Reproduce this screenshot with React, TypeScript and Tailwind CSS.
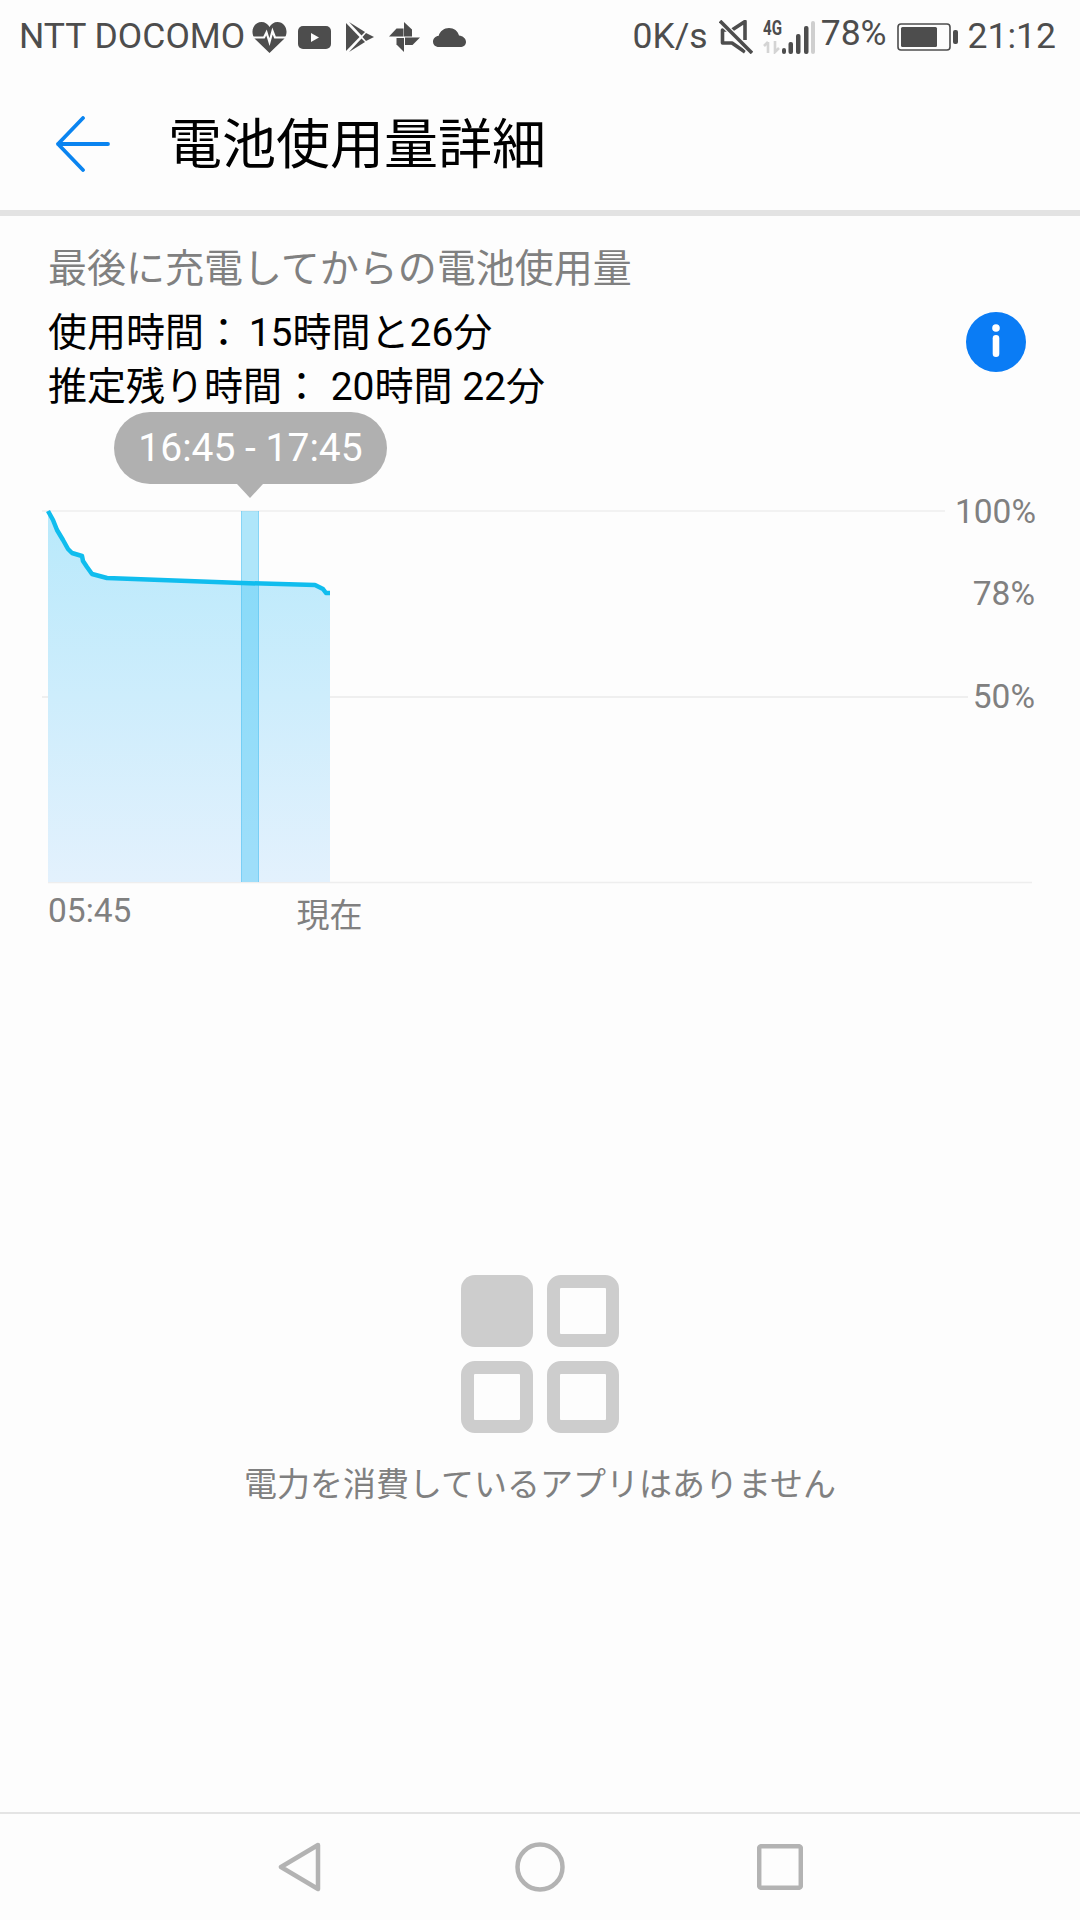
const font = { fontFamily: 'Roboto, "Noto Sans CJK JP", sans-serif' };

function StatusLeftIcons() {
  return (
    <div className="flex items-center">
      {/* heart rate */}
      <svg width="35" height="31" viewBox="0 0 35 31" className="ml-[7px]">
        <path d="M17.5 31 L3 17 C-2.5 10 1.5 0 9.5 0 C13 0 16 2 17.5 5 C19 2 22 0 25.5 0 C33.5 0 37.5 10 32 17 Z" fill="#4d4d4d" />
        <path d="M0 15.5 H12 L14.5 10.5 L17.5 20 L20.5 9 L23 15.5 H35" fill="none" stroke="#fdfdfd" strokeWidth="2.2" />
      </svg>
      {/* youtube */}
      <svg width="33" height="23" viewBox="0 0 33 23" className="ml-[11px]">
        <rect x="0" y="0" width="33" height="23" rx="5" fill="#4d4d4d" />
        <path d="M13 7 L21 11.5 L13 16 Z" fill="#fdfdfd" />
      </svg>
      {/* play store */}
      <svg width="28" height="30" viewBox="0 0 28 30" className="ml-[15px]">
        <path d="M0 1 L13.5 15 L0 29 Z" fill="#4d4d4d" />
        <path d="M3 0 L19 10 L15.5 13.5 Z" fill="#4d4d4d" />
        <path d="M20 11 L28 15 L20 19 L16.5 15 Z" fill="#4d4d4d" />
        <path d="M3 30 L19 20 L15.5 16.5 Z" fill="#4d4d4d" />
      </svg>
      {/* pinwheel */}
      <svg width="31" height="30" viewBox="0 0 31 30" className="ml-[15px]">
        <path d="M15 0 L23 7.5 V14.5 H15 Z" fill="#4d4d4d" />
        <path d="M16 15.5 H31 L23.5 23 H16 Z" fill="#4d4d4d" />
        <path d="M15 16 V30 L7.5 22.5 V16 Z" fill="#4d4d4d" />
        <path d="M14.5 14.5 H0 L7.5 6.5 H14.5 Z" fill="#4d4d4d" />
      </svg>
      {/* cloud */}
      <svg width="33" height="19" viewBox="0 0 33 19" className="ml-[13px]">
        <path d="M6 19 C2 19 0 16.5 0 13.5 C0 10.5 2.5 8 5.5 8 C7 3 11 0 16 0 C21 0 25 3 26 7.5 C30 8 33 10.5 33 14 C33 17 30.5 19 27 19 Z" fill="#4d4d4d" />
      </svg>
    </div>
  );
}

function StatusRightIcons() {
  return (
    <div className="flex items-center">
      <span>0K/s</span>
      {/* mute */}
      <svg width="34" height="34" viewBox="0 0 34 34" className="ml-[11px]">
        <path d="M26 20 V1.5 L13 10 H3.5 V23 H13 L26 32" fill="none" stroke="#4d4d4d" strokeWidth="3.6" strokeLinejoin="round" />
        <path d="M1 1 L33 33" stroke="#fdfdfd" strokeWidth="6" />
        <path d="M1 1 L33 33" stroke="#4d4d4d" strokeWidth="3.6" />
      </svg>
      {/* 4G + signal */}
      <div className="relative ml-[10px] h-[34px] w-[52px]">
        <span className="absolute left-0 top-[-3px] origin-left scale-x-[0.72] text-[21px] leading-[22px] font-bold text-[#4d4d4d]">4G</span>
        <svg width="52" height="34" viewBox="0 0 52 34" className="absolute left-0 top-0">
          <path d="M5 33 V22 M1 26 L5 22 M12 21 V32 L16 28" fill="none" stroke="#d4d4d4" strokeWidth="2.6" />
          <rect x="19" y="28" width="4" height="6" rx="2" fill="#4d4d4d" />
          <rect x="25.5" y="22" width="4.5" height="12" rx="2" fill="#4d4d4d" />
          <rect x="33" y="14" width="4.5" height="20" rx="2" fill="#4d4d4d" />
          <rect x="41" y="6" width="4.5" height="28" rx="2" fill="#4d4d4d" />
          <rect x="48" y="1" width="4" height="33" rx="2" fill="#cfcfcf" />
        </svg>
      </div>
      <span className="ml-[6px] mt-[-6px]">78%</span>
      {/* battery */}
      <svg width="61" height="28" viewBox="0 0 61 28" className="ml-[10px]">
        <rect x="1" y="1" width="52" height="26" rx="3" fill="none" stroke="#4d4d4d" strokeWidth="1.6" />
        <rect x="4" y="4" width="36" height="20" rx="1.5" fill="#4d4d4d" />
        <rect x="56" y="7" width="5" height="14" rx="2" fill="#4d4d4d" />
      </svg>
      <span className="ml-[10px]">21:12</span>
    </div>
  );
}

function BatteryChart() {
  const line = "48,510 53,519 57,529 63,539 68,548 72,552 82,555 83,560 87,566 92,573 107,577 242,582 315,584 323,588 326,592 330,592";
  return (
    <div className="relative h-[480px] w-full">
      {/* tooltip */}
      <div className="absolute left-[114px] top-0 z-10 flex h-[72px] w-[273px] items-center justify-center rounded-[36px] bg-[#b0b0b0] text-[39px] text-white">
        16:45 - 17:45
      </div>
      <svg width="1080" height="480" viewBox="0 411 1080 480" className="absolute left-0 top-0">
        <defs>
          <linearGradient id="fill" x1="0" y1="0" x2="0" y2="1">
            <stop offset="0" stopColor="#b8e9fb" />
            <stop offset="1" stopColor="#e3f1fd" />
          </linearGradient>
        </defs>
        <path d="M250 497 L237 483 H263 Z" fill="#b0b0b0" />
        <line x1="42" x2="945" y1="510" y2="510" stroke="#eeeeee" strokeWidth="1.5" />
        <line x1="42" x2="968" y1="696" y2="696" stroke="#eaeaea" strokeWidth="1.5" />
        <line x1="48" x2="1032" y1="881.5" y2="881.5" stroke="#eeeeee" strokeWidth="1.5" />
        <polygon points={`${line} 330,881 48,881`} fill="url(#fill)" />
        <rect x="241" y="510" width="18" height="371" fill="#39c2f5" fillOpacity="0.4" />
        <line x1="241.5" x2="241.5" y1="510" y2="881" stroke="#39b5ee" strokeOpacity="0.35" />
        <line x1="258.5" x2="258.5" y1="510" y2="881" stroke="#39b5ee" strokeOpacity="0.35" />
        <polyline points={line} fill="none" stroke="#10bdee" strokeWidth="4.5" strokeLinejoin="round" />
      </svg>
    </div>
  );
}

function EmptyGrid() {
  return (
    <div className="grid w-[158px] grid-cols-2 gap-[14px]">
      <div className="h-[72px] w-[72px] rounded-[14px] bg-[#cdcdcd]" />
      <div className="h-[72px] w-[72px] rounded-[14px] border-[13px] border-[#cdcdcd]" />
      <div className="h-[72px] w-[72px] rounded-[14px] border-[13px] border-[#cdcdcd]" />
      <div className="h-[72px] w-[72px] rounded-[14px] border-[13px] border-[#cdcdcd]" />
    </div>
  );
}

export default function App() {
  return (
    <div className="flex h-[1920px] w-[1080px] flex-col overflow-hidden bg-[#fdfdfd]" style={font}>
      {/* Status bar */}
      <div className="flex h-[74px] items-center justify-between pl-[19px] pr-[24px] text-[35.5px] text-[#4d4d4d]">
        <div className="flex items-center">
          <span>NTT DOCOMO</span>
          <StatusLeftIcons />
        </div>
        <StatusRightIcons />
      </div>

      {/* Header */}
      <div className="flex h-[136px] items-center pl-[56px]">
        <svg width="54" height="56" viewBox="0 0 54 56" className="mt-[3px]">
          <path d="M27 2 L2 28 L27 54 M2 28 H52" fill="none" stroke="#0a84f0" strokeWidth="3.8" strokeLinecap="round" strokeLinejoin="round" />
        </svg>
        <h1 className="ml-[58px] mt-[7px] text-[54px] font-normal text-black">電池使用量詳細</h1>
      </div>
      <div className="h-[6px] bg-[#e3e3e3]" />

      {/* Summary */}
      <div className="flex flex-col pl-[48px] pr-[54px] pt-[28px]">
        <p className="text-[39px] leading-[50px] text-[#808080]">最後に充電してからの電池使用量</p>
        <div className="flex items-start justify-between">
          <div className="mt-[12px] text-[39px] leading-[54px] text-black">
            <p>使用時間：<span className="ml-[-4px]"> 15時間と26分</span></p>
            <p>推定残り時間： 20時間 22分</p>
          </div>
          <svg width="60" height="60" viewBox="0 0 60 60" className="mt-[18px]">
            <circle cx="30" cy="30" r="30" fill="#0a7cf5" />
            <circle cx="30" cy="16" r="3.8" fill="#ffffff" />
            <rect x="26.7" y="23" width="6.6" height="22" rx="3.3" fill="#ffffff" />
          </svg>
        </div>
      </div>

      {/* Chart */}
      <div className="relative mt-[-2px]">
        <BatteryChart />
        <span className="absolute right-[44px] top-[82px] text-[33.5px] leading-[36px] text-[#808080]">100%</span>
        <span className="absolute right-[45px] top-[164px] text-[33.5px] leading-[36px] text-[#808080]">78%</span>
        <span className="absolute right-[45px] top-[267px] text-[33.5px] leading-[36px] text-[#808080]">50%</span>
      </div>
      <div className="flex items-start pl-[48px] text-[#808080]">
        <span className="text-[33.5px] leading-[38px]">05:45</span>
        <span className="ml-[165px] mt-[5px] text-[33px] leading-[38px]">現在</span>
      </div>

      {/* Empty state */}
      <div className="mt-[340px] flex flex-col items-center">
        <EmptyGrid />
        <p className="mt-[31px] text-[33px] leading-[42px] text-[#808080]">電力を消費しているアプリはありません</p>
      </div>

      {/* Nav bar */}
      <div className="mt-auto flex h-[108px] items-center justify-center border-t-2 border-[#e4e4e4]">
        <svg width="44" height="50" viewBox="0 0 44 50">
          <path d="M40 3 L3 25 L40 47 Z" fill="none" stroke="#b3b3b3" strokeWidth="4.5" strokeLinejoin="round" />
        </svg>
        <svg width="50" height="50" viewBox="0 0 50 50" className="ml-[193px]">
          <circle cx="25" cy="25" r="22.5" fill="none" stroke="#b3b3b3" strokeWidth="4.5" />
        </svg>
        <svg width="46" height="46" viewBox="0 0 46 46" className="ml-[192px]">
          <rect x="2.2" y="2.2" width="41.6" height="41.6" rx="2" fill="none" stroke="#b3b3b3" strokeWidth="4.5" />
        </svg>
      </div>
    </div>
  );
}
